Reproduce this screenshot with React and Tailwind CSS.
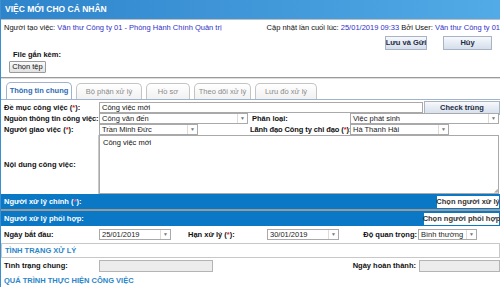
const F = { fontFamily: '"Liberation Sans", Arial, sans-serif' };

function Sel({ w, value }) {
  return (
    <div className={`flex items-center h-[11px] border border-[#a9a9a9] bg-white ${w}`}>
      <span className="flex-1 pl-[2px] leading-none text-[7.5px] text-[#222]">{value}</span>
      <span className="w-[10px] h-full border-l border-[#dcdcdc] flex items-center justify-center text-[5px] text-[#777]">▼</span>
    </div>
  );
}

function Req() {
  return <>(<span className="text-[#e0242c]">*</span>)</>;
}

function Btn({ children, className = '' }) {
  return (
    <div className={`flex items-center justify-center h-[14px] border border-[#a8b4c4] bg-gradient-to-b from-[#f7f9fc] to-[#d4deeb] text-[7.5px] font-bold text-[#1d2b44] ${className}`}>
      {children}
    </div>
  );
}

function Tab({ label, active, w }) {
  return (
    <div className={`${w} rounded-t-[5px] border border-b-0 flex items-center justify-center text-[7.5px] ${active ? 'h-[17px] border-[#9fb4cc] bg-white font-bold text-[#2a6db4]' : 'h-[16px] border-[#c4c4c4] bg-gradient-to-b from-white to-[#f1f1f1] text-[#8a8a8a]'}`}>
      {label}
    </div>
  );
}

export default function App() {
  return (
    <div style={F} className="w-[500px] h-[287px] overflow-hidden whitespace-nowrap bg-white border-l border-[#3b8fd0] text-[7.5px] text-[#111]">
      <div className="h-[19px] bg-gradient-to-r from-[#2e84cb] to-[#52aae6] flex items-center pl-[4px] text-[8.5px] font-bold text-white">
        VIỆC MỚI CHO CÁ NHÂN
      </div>
      <div className="h-[1px] bg-[#bfbfbf]" />
      <div className="flex justify-between items-center h-[16px] pl-[3px]">
        <div>Người tạo việc: <span className="text-[#3030c8]">Văn thư Công ty 01 - Phòng Hành Chính Quản trị</span></div>
        <div>Cập nhật lần cuối lúc: <span className="text-[#3030c8]">25/01/2019 09:33</span> Bởi User: <span className="text-[#3030c8]">Văn thư Công ty 01</span></div>
      </div>
      <div className="flex justify-end gap-[16px] pr-[8px] h-[15px]">
        <Btn className="w-[42px]">Lưu và Gửi</Btn>
        <Btn className="w-[49px]">Hủy</Btn>
      </div>
      <div className="pl-[12px] font-bold h-[8px] leading-[8px]">File gắn kèm:</div>
      <div className="pl-[8px] pt-[2px] h-[18px]">
        <div className="w-[37px] h-[12px] border border-[#9a9a9a] rounded-[1px] bg-gradient-to-b from-[#fafafa] to-[#e2e2e2] flex items-center justify-center">Chọn tệp</div>
      </div>
      <div className="h-[1px] bg-[#9a9a9a]" />
      <div className="h-[1px] bg-[#dedede]" />
      <div className="flex items-end gap-[4px] pl-[5px] pt-[3px] border-b border-[#9fb4cc]">
        <Tab label="Thông tin chung" active w="w-[66px]" />
        <Tab label="Bộ phận xử lý" w="w-[66px]" />
        <Tab label="Hồ sơ" w="w-[44px]" />
        <Tab label="Theo dõi xử lý" w="w-[57px]" />
        <Tab label="Lưu đồ xử lý" w="w-[62px]" />
      </div>
      <div className="flex items-center h-[11px] mt-[2px] pl-[3px]">
        <div className="w-[95px] font-bold">Đề mục công việc <Req />:</div>
        <div className="w-[324px] h-[11px] border border-[#a9a9a9] pl-[2px] leading-[9px]">Công việc mới</div>
        <Btn className="ml-[1px] w-[76px] h-[12px]">Check trùng</Btn>
      </div>
      <div className="flex items-center h-[11px] pl-[3px]">
        <div className="w-[95px] font-bold tracking-[-0.1px]">Nguồn thông tin công việc:</div>
        <Sel w="w-[149px]" value="Công văn đến" />
        <div className="w-[102px] pl-[4px] font-bold">Phân loại:</div>
        <Sel w="w-[149px]" value="Việc phát sinh" />
      </div>
      <div className="flex items-center h-[11px] pl-[3px]">
        <div className="w-[95px] font-bold">Người giao việc <Req />:</div>
        <Sel w="w-[99px]" value="Trần Minh Đức" />
        <div className="w-[152px] pl-[52px] font-bold tracking-[-0.1px]">Lãnh đạo Công ty chỉ đạo <Req />:</div>
        <Sel w="w-[99px]" value="Hà Thanh Hải" />
      </div>
      <div className="flex h-[59px]">
        <div className="w-[98px] pl-[3px] flex items-center font-bold border-r border-[#c8c8c8]">Nội dung công việc:</div>
        <div className="flex-1 relative border border-[#a9a9a9] mr-[1px] pl-[3px] pt-[1px]">
          Công việc mới
          <span className="absolute right-0 bottom-0 text-[5px] text-[#aaa] leading-none">◢</span>
        </div>
      </div>
      <div className="h-[15px] bg-[#0b78c6] flex items-center justify-between pl-[3px] pr-[1px]">
        <div className="font-bold text-white">Người xử lý chính (<span className="text-[#ff5a8a]">*</span>):</div>
        <div className="bg-white h-[12px] w-[62px] flex items-center justify-center font-bold text-[#333]">Chọn người xử lý</div>
      </div>
      <div className="h-[2px] bg-[#9a9a9a]" />
      <div className="h-[15px] bg-[#0b78c6] flex items-center justify-between pl-[3px] pr-[1px]">
        <div className="font-bold text-white">Người xử lý phối hợp:</div>
        <div className="bg-white h-[12px] w-[75px] flex items-center justify-center font-bold text-[#333]">Chọn người phối hợp</div>
      </div>
      <div className="flex items-center h-[17px] pl-[3px]">
        <div className="w-[95px] font-bold">Ngày bắt đầu:</div>
        <Sel w="w-[72px]" value="25/01/2019" />
        <div className="w-[96px] pl-[17px] font-bold">Hạn xử lý <Req />:</div>
        <Sel w="w-[72px]" value="30/01/2019" />
        <div className="w-[79px] text-right pr-[1px] font-bold">Độ quan trọng:</div>
        <Sel w="w-[59px]" value="Bình thường" />
      </div>
      <div className="h-[15px] border border-[#c8c8c8] flex items-center pl-[3px] font-bold text-[#2a86c8]">TÌNH TRẠNG XỬ LÝ</div>
      <div className="flex items-center h-[15px] pl-[3px]">
        <div className="w-[95px] font-bold">Tình trạng chung:</div>
        <div className="w-[114px] h-[12px] border border-[#b4b4b4] bg-[#ececec]" />
        <div className="flex-1 text-right pr-[3px] font-bold">Ngày hoàn thành:</div>
        <div className="w-[81px] h-[12px] border border-[#b4b4b4] bg-[#ececec]" />
      </div>
      <div className="h-[15px] flex items-center pl-[3px] font-bold text-[#2a86c8]">QUÁ TRÌNH THỰC HIỆN CÔNG VIỆC</div>
    </div>
  );
}
